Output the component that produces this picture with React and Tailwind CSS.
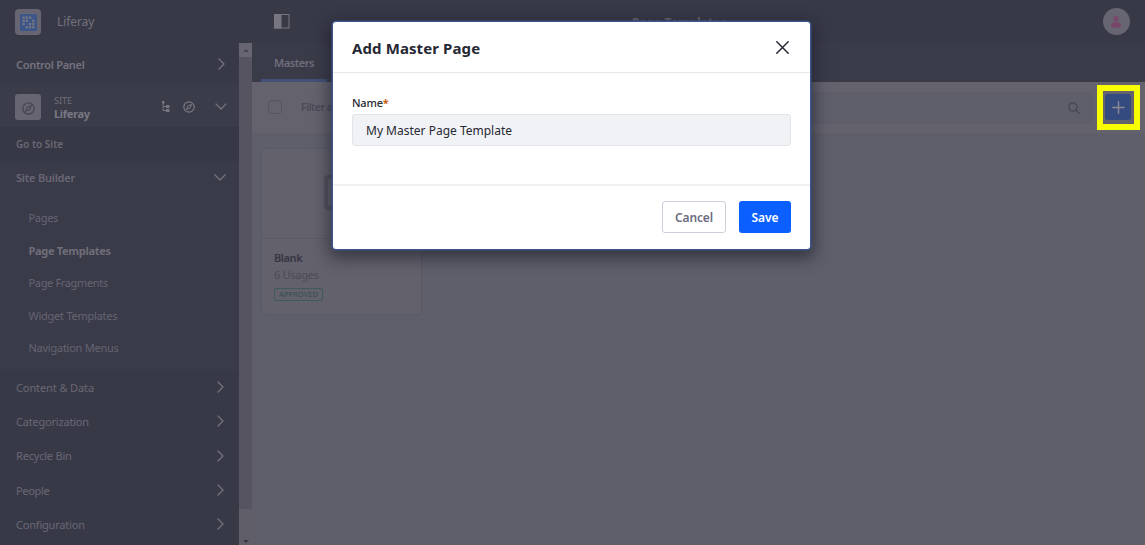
const Chevron = ({ down }) => (
  <svg
    className={down ? "h-[7px] w-[12px]" : "h-[12px] w-[7px]"}
    viewBox={down ? "0 0 12 7" : "0 0 7 12"}
    fill="none"
    stroke="#73727e"
    strokeWidth="1.3"
    strokeLinecap="round"
    strokeLinejoin="round"
  >
    <path d={down ? "M1 1l5 5 5-5" : "M1 1l5 5-5 5"} />
  </svg>
);

const Compass = ({ className, color }) => (
  <svg className={className} viewBox="0 0 12 12" fill="none" stroke={color} strokeWidth="1.2">
    <circle cx="6" cy="6" r="5.2" />
    <path d="M8.6 3.4L7 7 3.4 8.6 5 5z" strokeWidth="1" />
  </svg>
);

const logoDots = [
  [0, 0], [1, 0], [2, 0],
  [0, 1], [1, 1], [3, 1],
  [0, 2], [2, 2], [3, 2],
  [1, 3], [2, 3], [3, 3],
];

const LogoMark = () => (
  <svg className="h-[17px] w-[17px]" viewBox="0 0 17 17">
    <rect width="17" height="17" rx="1" fill="#3d5689" />
    <g fill="#777783">
      {logoDots.map(([x, y]) => (
        <rect key={`${x}-${y}`} x={2.5 + x * 3.2} y={2.5 + y * 3.2} width="2.3" height="2.3" />
      ))}
    </g>
  </svg>
);

const pages = [
  ["Pages", "tracking-[-0.3px] text-[#656471]"],
  ["Page Templates", "font-bold tracking-[-0.3px] text-[#6f6d78]"],
  ["Page Fragments", "tracking-[-0.35px] text-[#656471]"],
  ["Widget Templates", "tracking-[-0.25px] text-[#656471]"],
  ["Navigation Menus", "tracking-[-0.25px] text-[#656471]"],
];

const sections = [
  ["Content & Data", "tracking-[-0.1px]"],
  ["Categorization", "tracking-[-0.2px]"],
  ["Recycle Bin", "tracking-[-0.2px]"],
  ["People", "tracking-[-0.3px]"],
  ["Configuration", "tracking-[-0.2px]"],
];

function Sidebar() {
  return (
    <aside className="flex h-full w-[252px] shrink-0 flex-col bg-[#383947]">
      <div className="flex h-[43px] shrink-0 items-center pl-[15px] pt-px">
        <div className="flex h-[26px] w-[26px] items-center justify-center rounded-sm bg-[#676571]">
          <LogoMark />
        </div>
        <span className="ml-4 text-[12px] tracking-[-0.1px] text-[#73717c]">Liferay</span>
      </div>
      <div className="flex min-h-0 flex-1">
        <div className="flex w-[239px] flex-col">
          <div className="flex h-[42px] shrink-0 items-center justify-between pl-4 pr-[14px] text-[11px] font-semibold tracking-[-0.3px] text-[#74727d]">
            <span className="pt-[2px]">Control Panel</span>
            <Chevron />
          </div>
          <div className="flex h-[42px] shrink-0 items-center bg-[#3b3c4a] pl-[15px] pr-3 pt-px">
            <div className="flex h-[26px] w-[26px] items-center justify-center rounded-[3px] bg-[#676571] pt-[3px]">
              <Compass className="h-[13px] w-[13px]" color="#474653" />
            </div>
            <div className="ml-[13px] flex flex-1 flex-col">
              <span className="text-[9px] leading-[13px] text-[#706e7a]">SITE</span>
              <span className="text-[11px] font-bold leading-[13px] tracking-[-0.3px] text-[#7a7883]">Liferay</span>
            </div>
            <svg className="h-[11px] w-[8px]" viewBox="0 0 8 11" fill="#777580">
              <path d="M0 0h2.5v2.5H1.6V5H4V4h3.5v3H4V6H1.6V9H4V8h3.5v3H4v-1H.7V2.5H0z" />
            </svg>
            <Compass className="ml-[13px] mr-[20px] h-[12px] w-[12px]" color="#7a7883" />
            <Chevron down />
          </div>
          <div className="flex h-[34px] shrink-0 items-center bg-[#373845] pl-4 pt-px text-[10px] font-semibold text-[#6a6874]">
            Go to Site
          </div>
          <div className="flex h-[33px] shrink-0 items-center justify-between bg-[#3a3b49] pl-4 pr-[13px] text-[11px] font-semibold tracking-[-0.2px] text-[#696774]">
            <span className="pt-[2px]">Site Builder</span>
            <Chevron down />
          </div>
          <div className="flex h-[176px] shrink-0 flex-col bg-[#3a3b49] pl-[28.5px] pt-[8px] text-[11px]">
            {pages.map(([label, style]) => (
              <div key={label} className={`flex h-[32.6px] shrink-0 items-center ${style}`}>
                {label}
              </div>
            ))}
          </div>
          <div className="flex flex-col">
            {sections.map(([label, tracking]) => (
              <div
                key={label}
                className={`flex h-[34.25px] shrink-0 items-center justify-between pl-4 pr-[15px] text-[11px] text-[#696774] ${tracking}`}
              >
                <span className="pt-[2px]">{label}</span>
                <Chevron />
              </div>
            ))}
          </div>
        </div>
        <div className="flex w-[13px] flex-col bg-[#605e69]">
          <div className="flex h-[14px] items-center justify-center bg-[#676571]">
            <svg className="h-[3px] w-[6px]" viewBox="0 0 6 3" fill="#464552">
              <path d="M0 3l3-3 3 3z" />
            </svg>
          </div>
          <div className="h-[452px] bg-[#555460]" />
          <div className="flex flex-1 items-end justify-center pb-[2px]">
            <svg className="h-[3px] w-[6px]" viewBox="0 0 6 3" fill="#393846">
              <path d="M0 0l3 3 3-3z" />
            </svg>
          </div>
        </div>
      </div>
    </aside>
  );
}

function Main() {
  return (
    <main className="flex min-w-0 flex-1 flex-col bg-[#5e5f6b]">
      <div className="flex h-[43px] shrink-0 items-center justify-between bg-[#383947] pl-[22px] pr-[15px]">
        <svg className="h-[15px] w-[16px]" viewBox="0 0 16 15">
          <rect x="0.5" y="0.5" width="14.5" height="13.5" fill="none" stroke="#777580" />
          <rect width="7.5" height="14.5" fill="#777580" />
        </svg>
        <span className="mr-[35px] pt-[2px] text-[12px] font-bold text-[#676572]">Page Templates</span>
        <div className="flex h-[27px] w-[27px] items-center justify-center rounded-full bg-[#676571]">
          <svg className="h-[12px] w-[10px]" viewBox="0 0 10 12" fill="#79476b">
            <circle cx="5" cy="2.7" r="2.6" />
            <path d="M0 9.5C0 7.5 2 6 5 6s5 1.5 5 3.5S8 11.8 5 11.8 0 11.5 0 9.5z" />
          </svg>
        </div>
      </div>
      <div className="flex h-[39px] shrink-0 bg-[#3a3b49] pl-[9px]">
        <div className="flex h-full w-[66px] items-center justify-center border-b-[3px] border-[#435078] pt-[5px] text-[11px] font-semibold tracking-[-0.45px] text-[#6f6d79]">
          Masters
        </div>
      </div>
      <div className="flex h-[51px] shrink-0 items-center bg-[#64626d] pl-4 pr-[14px]">
        <div className="mb-px h-[14px] w-[14px] rounded-sm border border-[#555461]" />
        <span className="ml-[19px] mr-[168px] w-8 overflow-hidden text-[10.5px] font-semibold tracking-[-0.5px] text-[#4a4957]">
          Filter a
        </span>
        <div className="mr-3 flex h-8 flex-1 items-center justify-end rounded-sm border border-[#5c5d69] bg-[#5e5f6b] pr-[12px]">
          <svg className="h-[12px] w-[12px]" viewBox="0 0 12 12" fill="none" stroke="#464552" strokeWidth="1.2">
            <circle cx="5" cy="5" r="4.2" />
            <path d="M8 8l3.3 3.3" strokeLinecap="round" />
          </svg>
        </div>
        <div className="mb-px flex h-[26px] w-[26px] items-center justify-center rounded-[3px] bg-[#344b80]">
          <svg className="h-[13px] w-[13px]" viewBox="0 0 13 13" stroke="#8a8791" strokeWidth="1.5" strokeLinecap="round">
            <path d="M6.5 .8v11.4M.8 6.5h11.4" />
          </svg>
        </div>
      </div>
      <div className="px-[10px] pt-4">
        <div className="flex h-[165px] w-[159px] flex-col rounded-[3px] bg-[#63616c] shadow-[0_0_2px_#4e4e5b]">
          <div className="flex h-[90px] items-center justify-center border-b border-[#5c5b68] pb-[3px]">
            <div className="h-[35px] w-[35px] rounded-[4px] border-4 border-[#54535f]" />
          </div>
          <div className="flex flex-col items-start pl-3 pt-[10px]">
            <span className="text-[11px] font-semibold leading-[17px] tracking-[-0.4px] text-[#353442]">Blank</span>
            <span className="text-[11px] leading-[17px] tracking-[-0.3px] text-[#4b4a57]">6 Usages</span>
            <span className="mt-[5px] flex h-[13px] w-[49px] items-center justify-center rounded-[2px] border border-[#3e5a5a] text-[7.5px] font-medium text-[#3a5155]">
              APPROVED
            </span>
          </div>
        </div>
      </div>
    </main>
  );
}

function Modal() {
  return (
    <div
      role="dialog"
      className="absolute left-[333px] top-[22px] flex h-[227px] w-[477px] flex-col rounded-[3px] bg-white text-[#272833] shadow-[0_0_0_1.5px_#3b558c,0_5px_16px_4px_rgba(25,25,38,0.6)]"
    >
      <div className="flex h-[51px] shrink-0 items-center justify-between border-b border-[#e7e7ed] pl-[19px] pr-[21px]">
        <h2 className="pt-[2px] text-[15px] font-bold tracking-[0.1px]">Add Master Page</h2>
        <svg className="h-[13px] w-[13px]" viewBox="0 0 13 13" stroke="#272833" strokeWidth="1.5" strokeLinecap="round">
          <path d="M.8.8l11.4 11.4M12.2.8L.8 12.2" />
        </svg>
      </div>
      <div className="flex h-[113px] shrink-0 flex-col border-b-2 border-[#f0f0f3] px-[19px] pt-[21px]">
        <label className="mb-px flex h-[19px] items-center text-[11px] font-medium tracking-[-0.2px]">
          Name<span className="font-bold text-[#c65a0c]">*</span>
        </label>
        <div className="flex h-8 items-center rounded-[3px] border border-[#e4e5ea] bg-[#f1f2f5] pl-[13px] pt-[2px] text-[12px]">
          My Master Page Template
        </div>
      </div>
      <div className="flex flex-1 items-center justify-end gap-[13px] pb-px pr-[19px]">
        <button className="h-8 w-16 rounded-[3px] border border-[#cdced9] pt-[2px] text-[12px] font-semibold tracking-[-0.1px] text-[#6b6c7e]">
          Cancel
        </button>
        <button className="h-8 w-[52px] rounded-[3px] bg-[#0b5fff] pt-[2px] text-[12px] font-semibold text-white">
          Save
        </button>
      </div>
    </div>
  );
}

export default function App() {
  return (
    <div className="relative flex h-[545px] w-[1145px] overflow-hidden whitespace-nowrap font-['Noto_Sans','Open_Sans',sans-serif]">
      <Sidebar />
      <Main />
      <div className="absolute left-[1097px] top-[85px] h-[45px] w-[43px] border-6 border-[#f8ff00]" />
      <Modal />
    </div>
  );
}
